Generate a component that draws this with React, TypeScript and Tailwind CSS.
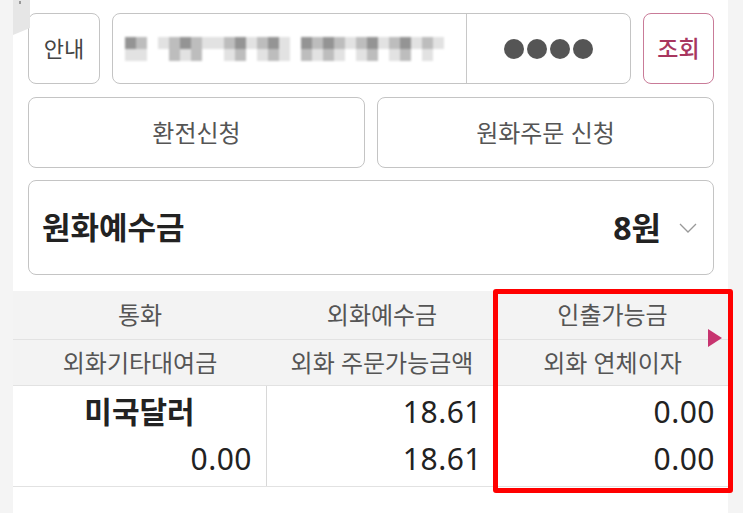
import React from "react";

const font = { fontFamily: '"Noto Sans", "Noto Sans CJK KR", sans-serif' };

const shades = ["#ffffff", "#e2e2e2", "#bdbdbd", "#949494"];
const row1 = [3, 2, 0, 1, 2, 3, 2, 1, 1, 2, 3, 1, 2, 3, 1, 0, 3, 2, 3, 2, 1, 2, 3, 1, 2, 3, 1, 2, 1, 0];
const row2 = [1, 1, 0, 0, 2, 1, 2, 0, 0, 1, 2, 0, 1, 2, 1, 0, 2, 1, 2, 1, 0, 1, 2, 0, 1, 2, 0, 1, 0, 0];

export default function App() {
  return (
    <div
      className="relative flex w-[743px] h-[513px] overflow-hidden bg-white"
      style={font}
    >
      <div className="w-[13px] shrink-0 bg-[#f4f4f4]" />
      <div className="relative flex-1 min-w-0 bg-white flex flex-col">
        <svg className="absolute left-0 top-0" width="20" height="36" viewBox="0 0 20 36">
          <polygon points="0,0 17,0 17,28 0,35" fill="#e6e6e6" />
          <rect x="6" y="1" width="2" height="3" fill="#999" />
        </svg>
        <div className="pl-[15px] pr-[14px] pt-[13px] flex flex-col">
          <div className="flex h-[71px] gap-[12px]">
            <div className="w-[72px] shrink-0 rounded-[8px] border-[1.5px] border-[#c4c4c4] flex items-center justify-center text-[22px] text-[#444]">
              안내
            </div>
            <div className="flex-1 min-w-0 rounded-[8px] border-[1.5px] border-[#c4c4c4] flex">
              <div className="flex-1 min-w-0 flex items-center pl-[12px] overflow-hidden">
                <div className="flex flex-col blur-[0.8px]" aria-label="계좌번호">
                  <div className="flex">
                    {row1.map((v, i) => (
                      <span key={i} className="w-[11px] h-[12px]" style={{ background: shades[v] }} />
                    ))}
                  </div>
                  <div className="flex">
                    {row2.map((v, i) => (
                      <span key={i} className="w-[11px] h-[12px]" style={{ background: shades[v] }} />
                    ))}
                  </div>
                </div>
              </div>
              <div className="w-[164px] shrink-0 border-l-[1.5px] border-[#c8c8c8] flex items-center justify-center gap-[3px]">
                <span className="w-[20px] h-[20px] rounded-full bg-[#555]" />
                <span className="w-[20px] h-[20px] rounded-full bg-[#555]" />
                <span className="w-[20px] h-[20px] rounded-full bg-[#555]" />
                <span className="w-[20px] h-[20px] rounded-full bg-[#555]" />
              </div>
            </div>
            <div className="w-[71px] shrink-0 rounded-[8px] border-[1.5px] border-[#c97b98] flex items-center justify-center text-[23px] text-[#a8365f] font-medium">
              조회
            </div>
          </div>
          <div className="grid grid-cols-2 gap-[12px] h-[71px] mt-[13px]">
            <div className="rounded-[8px] border-[1.5px] border-[#c4c4c4] flex items-center justify-center text-[24px] text-[#555]">
              환전신청
            </div>
            <div className="rounded-[8px] border-[1.5px] border-[#c4c4c4] flex items-center justify-center text-[24px] text-[#555]">
              원화주문 신청
            </div>
          </div>
          <div className="mt-[12px] h-[95px] rounded-[8px] border-[1.5px] border-[#c4c4c4] flex items-center pl-[13px] pr-[16px]">
            <span className="text-[31px] font-bold text-[#222]">원화예수금</span>
            <span className="ml-auto text-[32px] font-bold text-[#222]">8원</span>
            <svg className="ml-[18px]" width="18" height="10" viewBox="0 0 18 10">
              <polyline points="1,1 9,9 17,1" fill="none" stroke="#999" strokeWidth="1.3" />
            </svg>
          </div>
        </div>
        <div className="mt-[16px] flex flex-col">
          <div className="bg-[#f3f3f3] text-[#555] text-[24px]">
            <div className="grid grid-cols-[254px_230px_minmax(0,1fr)] h-[49px] items-center border-b border-[#e2e2e2] text-center">
              <span>통화</span>
              <span>외화예수금</span>
              <span>인출가능금</span>
            </div>
            <div className="grid grid-cols-[254px_230px_minmax(0,1fr)] h-[45px] items-center text-center">
              <span>외화기타대여금</span>
              <span>외화 주문가능금액</span>
              <span>외화 연체이자</span>
            </div>
          </div>
          <div className="grid grid-cols-[254px_230px_minmax(0,1fr)] h-[102px] border-t border-b border-[#e2e2e2] text-[#222] text-[30px]">
            <div className="border-r-[1.5px] border-[#d8d8d8] flex flex-col pr-[14px] pt-[7px]">
              <span className="text-center pl-[14px] font-bold leading-[38px]">미국달러</span>
              <span className="text-right leading-[48px] mt-[4px] tracking-[0.5px]">0.00</span>
            </div>
            <div className="flex flex-col pr-[15px] pt-[7px] text-right tracking-[0.5px]">
              <span className="leading-[38px]">18.61</span>
              <span className="leading-[48px] mt-[4px]">18.61</span>
            </div>
            <div className="flex flex-col pr-[13px] pt-[7px] text-right tracking-[0.5px]">
              <span className="leading-[38px]">0.00</span>
              <span className="leading-[48px] mt-[4px]">0.00</span>
            </div>
          </div>
        </div>
        <svg className="absolute left-[695px] top-[329px]" width="14" height="18" viewBox="0 0 14 18">
          <polygon points="0,0 14,9 0,18" fill="#c7346f" />
        </svg>
      </div>
      <div className="w-[15px] shrink-0 bg-[#f4f4f4]" />
      <div className="absolute left-[493px] top-[289px] w-[240px] h-[204px] border-[5px] border-[#ff0000] rounded-[3px]" />
    </div>
  );
}
